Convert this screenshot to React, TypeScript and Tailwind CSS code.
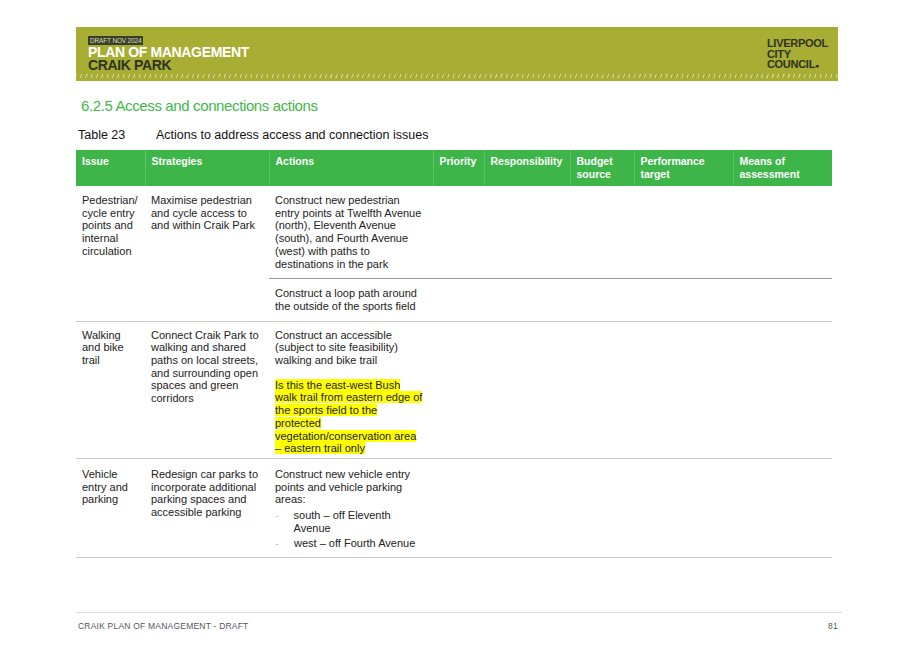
export default function App() {
  const f = { fontFamily: '"Liberation Sans", Arial, sans-serif' };
  const td = "px-[6px] pt-[6px] text-[11px] leading-[12.7px] text-[#222]";
  return (
    <div className="w-[917px] h-[648px] bg-white relative" style={f}>
      <div className="absolute left-[76px] top-[27px] w-[762px] h-[54px] bg-[#a8ad34] overflow-hidden">
        <div className="absolute left-[12px] top-[9px] bg-[#3a3f2a] text-[#d8dbb0] text-[6.5px] px-[2px] leading-[9px] tracking-tight">DRAFT NOV 2024</div>
        <div className="absolute left-[12px] top-[19px] text-white font-bold text-[14px] leading-[13px] tracking-tight">PLAN OF MANAGEMENT</div>
        <div className="absolute left-[12px] top-[32px] text-[#2f3320] font-bold text-[14px] leading-[13px] tracking-tight">CRAIK PARK</div>
        <div className="absolute right-[10px] top-[11px] text-[#2f3320] font-bold text-[11px] leading-[10.5px] tracking-tight">LIVERPOOL<br/>CITY<br/>COUNCIL<span className="text-[7px]">●</span></div>
        <div className="absolute left-0 right-0 bottom-[3px] h-[4px]" style={{ backgroundImage: "repeating-linear-gradient(110deg, rgba(255,255,255,0.5) 0 1px, transparent 1px 5px)" }} />
      </div>
      <div className="absolute left-[81px] top-[95px] text-[#43b649] text-[15px] tracking-tight">6.2.5 Access and connections actions</div>
      <div className="absolute left-[78px] top-[126px] text-[12.5px] text-[#111] flex"><span className="w-[78px]">Table 23</span><span>Actions to address access and connection issues</span></div>
      <table className="absolute left-[76px] top-[150px] w-[756px] border-collapse" style={{ tableLayout: "fixed" }}>
        <colgroup>
          <col style={{ width: 69 }} /><col style={{ width: 124 }} /><col style={{ width: 164 }} /><col style={{ width: 51 }} />
          <col style={{ width: 86 }} /><col style={{ width: 64 }} /><col style={{ width: 99 }} /><col style={{ width: 99 }} />
        </colgroup>
        <thead>
          <tr className="bg-[#3db549] text-white font-bold text-[10.5px] leading-[13px] h-[36px] align-top">
            {["Issue","Strategies","Actions","Priority","Responsibility","Budget source","Performance target","Means of assessment"].map((h,i)=>(
              <th key={i} className={`text-left px-[6px] pt-[5px] font-bold ${i>0?"border-l border-[#5cc467]":""}`}>{h}</th>
            ))}
          </tr>
        </thead>
        <tbody>
          <tr className="align-top">
            <td rowSpan={2} className={`${td} border-b border-[#ccc] pt-[8px] pr-[2px]`}>Pedestrian/ cycle entry points and internal circulation</td>
            <td rowSpan={2} className={`${td} border-b border-[#ccc] pt-[8px]`}>Maximise pedestrian and cycle access to and within Craik Park</td>
            <td className={`${td} pt-[8px] pb-[8px] pr-[8px] border-b border-[#999]`}>Construct new pedestrian entry points at Twelfth Avenue (north), Eleventh Avenue (south), and Fourth Avenue (west) with paths to destinations in the park</td>
            <td colSpan={5} className="border-b border-[#999]" />
          </tr>
          <tr className="align-top">
            <td className={`${td} pt-[8px] pb-[8px] border-b border-[#ccc]`}>Construct a loop path around the outside of the sports field</td>
            <td colSpan={5} className="border-b border-[#ccc]" />
          </tr>
          <tr className="align-top">
            <td className={`${td} pt-[7px] border-b border-[#ccc]`}>Walking and bike trail</td>
            <td className={`${td} pt-[7px] border-b border-[#ccc]`}>Connect Craik Park to walking and shared paths on local streets, and surrounding open spaces and green corridors</td>
            <td className={`${td} pt-[7px] pb-[3px] pr-[8px] border-b border-[#ccc]`}>
              <div>Construct an accessible (subject to site feasibility) walking and bike trail</div>
              <div className="mt-[12px]"><span className="bg-[#ffff00]" style={{ boxDecorationBreak: "clone" }}>Is this the east-west Bush walk trail from eastern edge of the sports field to the protected vegetation/conservation area – eastern trail only</span></div>
            </td>
            <td colSpan={5} className="border-b border-[#ccc]" />
          </tr>
          <tr className="align-top">
            <td className={`${td} pt-[9px] border-b border-[#ccc]`}>Vehicle entry and parking</td>
            <td className={`${td} pt-[9px] border-b border-[#ccc]`}>Redesign car parks to incorporate additional parking spaces and accessible parking</td>
            <td className={`${td} pt-[9px] pb-[7px] border-b border-[#ccc]`}>
              <div>Construct new vehicle entry points and vehicle parking areas:</div>
              <div className="flex mt-[3px]"><span className="w-[19px] text-[#9fd6a3]">-</span>south – off Eleventh Avenue</div>
              <div className="flex mt-[3px]"><span className="w-[19px] text-[#9fd6a3]">-</span>west – off Fourth Avenue</div>
            </td>
            <td colSpan={5} className="border-b border-[#ccc]" />
          </tr>
        </tbody>
      </table>
      <div className="absolute left-[76px] top-[612px] w-[766px] border-t border-[#ddd] flex justify-between pt-[7px] text-[8.5px] text-[#555] tracking-wide">
        <span className="pl-[2px]">CRAIK PLAN OF MANAGEMENT - DRAFT</span><span className="pr-[4px]">81</span>
      </div>
    </div>
  );
}
